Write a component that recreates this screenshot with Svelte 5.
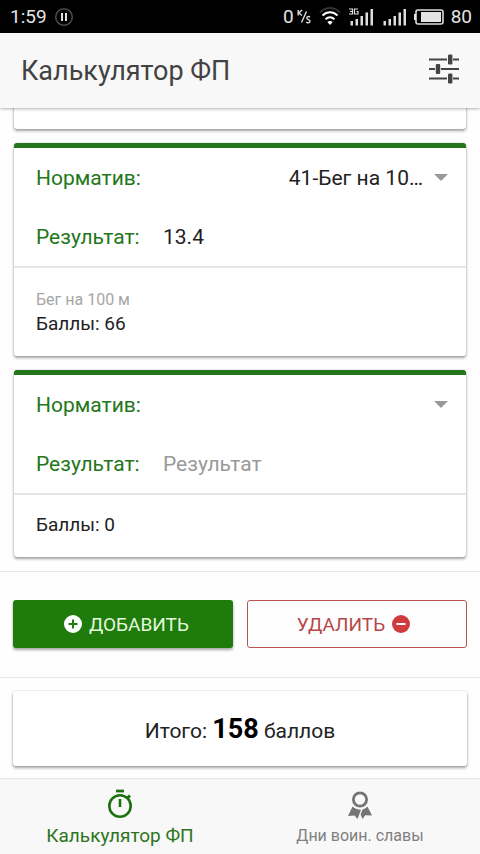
<script>
  let entries = $state([
    { id: 1, standard: '41-Бег на 10…', result: '13.4', name: 'Бег на 100 м', points: 66 },
    { id: 2, standard: '', result: '', name: '', points: 0 },
  ]);

  let total = $state(158);
  let nextId = 3;

  function addEntry() {
    entries.push({ id: nextId++, standard: '', result: '', name: '', points: 0 });
  }

  function removeEntry() {
    entries.pop();
  }
</script>

<div class="app">
  <div class="status">
    <span class="clock">1:59</span>
    <svg class="pause" width="20" height="20" viewBox="0 0 20 20">
      <circle cx="10" cy="10" r="8.3" fill="none" stroke="#4a4a4a" stroke-width="1.6" />
      <path d="M7 6h2v8H7zM11 6h2v8h-2z" fill="#ddd" />
    </svg>
    <span class="rate">0</span>
    <svg class="unit" width="14" height="16" viewBox="0 0 14 16" fill="none" stroke="#ddd" stroke-width="1.4">
      <path d="M1.2 1v5.5M5 1L1.8 4L5 6.5M9.5 2.5L4.5 13.5M13 8.2C11.8 7 9.6 7.6 9.8 9.2C10 10.8 13 10.4 13 12.2C13 14 10.2 14.2 9.2 12.8" />
    </svg>
    <svg class="wifi" width="22" height="20" viewBox="0 0 22 20" fill="none" stroke-width="2">
      <path d="M1 5.5C7-.5 15-.5 21 5.5" stroke="#333" />
      <path d="M3.5 8.5C8 4.3 14 4.3 18.5 8.5M6.5 12.2C9.3 9.7 12.7 9.7 15.5 12.2" stroke="#fff" />
      <path d="M8.3 15Q11 13 13.7 15L11 18z" fill="#fff" />
    </svg>
    <svg class="signal" width="26" height="20" viewBox="0 0 26 20" fill="#ddd">
      <path d="M2.5 14H5v4.5H2.5zM7.5 12H10v6.5H7.5zM12.5 9H15v9.5h-2.5zM17.5 5.5H20v13h-2.5zM22.5 2H25v16.5h-2.5z" />
      <path d="M1 2h3.5v5H1M2 4.5h2.5M10 2H6.5v5H10V4.5H8.5" fill="none" stroke="#ddd" stroke-width="1.2" />
    </svg>
    <svg class="signal" width="26" height="20" viewBox="0 0 26 20" fill="#ddd">
      <path d="M2.5 14H5v4.5H2.5zM7.5 12H10v6.5H7.5zM12.5 9H15v9.5h-2.5zM17.5 5.5H20v13h-2.5zM22.5 2H25v16.5h-2.5z" />
    </svg>
    <svg class="battery" width="30" height="16" viewBox="0 0 30 16">
      <rect x="2" y="1" width="27" height="14" rx="2" fill="none" stroke="#ddd" stroke-width="1.6" />
      <path d="M0 5h2v6H0zM7 3h20v10H7z" fill="#e4e4e4" />
    </svg>
    <span>80</span>
  </div>

  <header>
    <h1>Калькулятор ФП</h1>
    <button class="options" aria-label="Настройки">
      <svg width="30" height="30" viewBox="0 0 30 30" fill="#444">
        <path d="M0 4.5h18v2H0zM24 4.5h6v2h-6zM0 14h6v2H0zM12 14h18v2H12zM0 23.5h18v2H0zM24 23.5h6v2h-6z" />
        <rect x="19" y="0.5" width="4.4" height="10" rx="1.2" />
        <rect x="6.8" y="10" width="4.4" height="10" rx="1.2" />
        <rect x="19" y="19.5" width="4.4" height="10" rx="1.2" />
      </svg>
    </button>
  </header>

  <main>
    <section class="card previous"></section>
    {#each entries as entry (entry.id)}
      <section class="card entry">
        <div class="row">
          <label for="standard-{entry.id}">Норматив:</label>
          <span class="picker">
            <select id="standard-{entry.id}" bind:value={entry.standard}>
              <option value=""></option>
              <option value="41-Бег на 10…">41-Бег на 10…</option>
            </select>
            <svg width="14" height="8" viewBox="0 0 14 8"><path d="M0 0h14L7 7z" fill="#999" /></svg>
          </span>
        </div>
        <div class="row">
          <label for="result-{entry.id}">Результат:</label>
          <input id="result-{entry.id}" type="text" placeholder="Результат" bind:value={entry.result} />
        </div>
        <div class="points">
          {#if entry.name}
            <p class="name">{entry.name}</p>
          {/if}
          <p>Баллы: {entry.points}</p>
        </div>
      </section>
    {/each}
  </main>

  <div class="actions">
    <button class="add" onclick={addEntry}>
      <svg width="18" height="18" viewBox="0 0 18 18">
        <circle cx="9" cy="9" r="9" fill="#fff" />
        <path d="M9 4.5v9M4.5 9h9" stroke="#1e7b0c" stroke-width="2" />
      </svg>
      ДОБАВИТЬ
    </button>
    <button class="remove" onclick={removeEntry}>
      УДАЛИТЬ
      <svg width="18" height="18" viewBox="0 0 18 18">
        <circle cx="9" cy="9" r="9" fill="#d03c3c" />
        <path d="M4.5 9h9" stroke="#fff" stroke-width="2" />
      </svg>
    </button>
  </div>

  <div class="summary">
    <div class="card total">
      <p>Итого: <b>{total}</b> баллов</p>
    </div>
  </div>

  <nav>
    <a class="active" href="#calculator">
      <svg width="26" height="30" viewBox="0 0 26 30" fill="none" stroke="#1c7010">
        <circle cx="13" cy="17" r="10.7" stroke-width="2.6" />
        <path d="M9 2h8" stroke-width="2.8" />
        <path d="M13 10v8" stroke-width="2.6" />
        <path d="M20 9.5L23 6.5" stroke-width="3" />
      </svg>
      Калькулятор ФП
    </a>
    <a href="#days">
      <svg width="24" height="28" viewBox="0 0 24 28" fill="#757575">
        <circle cx="12" cy="8.5" r="6.6" fill="none" stroke="#757575" stroke-width="2.8" />
        <path d="M4.5 15.5C6.5 17.5 9 18.6 13 18.7L9.5 28L6.5 24.5L0 25z" />
        <path d="M19.5 15.5C18 17 16.2 18 14.6 18.5L12.6 23.5L14.5 28L17.3 24.3L24 24.5z" />
      </svg>
      Дни воин. славы
    </a>
  </nav>
</div>

<style>
  :global(body) {
    margin: 0;
  }

  .app {
    display: flex;
    flex-direction: column;
    height: 100vh;
    background: #fefefe;
    color: #222;
    font-family: Roboto, 'Liberation Sans', sans-serif;
  }

  .app * {
    box-sizing: border-box;
  }

  svg {
    flex: none;
  }

  h1,
  p {
    margin: 0;
    font-weight: 400;
  }

  button,
  input,
  select {
    font: inherit;
    color: inherit;
    background: none;
    border: 0;
    padding: 0;
  }

  .status {
    display: flex;
    align-items: center;
    flex: none;
    height: 33px;
    padding: 0 8px 0 10px;
    background: #000;
    color: #e4e4e4;
    font-size: 19px;
  }

  .pause {
    margin-left: 7px;
  }

  .rate {
    margin-left: auto;
  }

  .unit {
    margin-left: 3px;
  }

  .wifi {
    margin: 0 7px 0 8px;
  }

  .signal {
    margin-right: 7px;
  }

  .battery {
    margin-right: 7px;
  }

  header {
    display: flex;
    align-items: center;
    justify-content: space-between;
    flex: none;
    height: 75px;
    padding: 0 21px;
    background: #f8f8f8;
    box-shadow: 0 1px 3px rgba(0, 0, 0, 0.3);
    z-index: 1;
  }

  h1 {
    font-size: 27px;
    color: #424242;
  }

  .options {
    display: flex;
    padding-bottom: 4px;
  }

  main {
    display: flex;
    flex-direction: column;
    justify-content: flex-end;
    flex: 1;
    gap: 14px;
    min-height: 0;
    padding: 0 14px 14px;
    overflow: hidden;
  }

  .card {
    flex: none;
    border-radius: 3px;
    background: #fff;
    box-shadow: 0 2px 3px rgba(0, 0, 0, 0.35), 0 0 2px rgba(0, 0, 0, 0.2);
  }

  .previous {
    height: 32px;
  }

  .entry {
    border-top: 5px solid #23761a;
  }

  .row {
    display: flex;
    align-items: center;
    height: 59px;
    padding: 0 18px 0 22px;
    font-size: 21px;
  }

  .row label {
    flex: none;
    width: 127px;
    color: #23761a;
  }

  .row input {
    flex: 1;
    min-width: 0;
    outline: 0;
  }

  .row input::placeholder {
    color: #999;
    opacity: 1;
  }

  .picker {
    display: flex;
    flex: 1;
    align-items: center;
    justify-content: flex-end;
    gap: 11px;
  }

  .picker select {
    width: 160px;
    appearance: none;
    text-align-last: right;
    outline: 0;
  }

  .points {
    padding: 18px 22px 20px;
    border-top: 2px solid #e6e6e6;
    font-size: 19px;
    line-height: 24px;
  }

  .name {
    padding-top: 2px;
    color: #a6a6a6;
    font-size: 16px;
  }

  .actions {
    display: grid;
    grid-template-columns: 1fr 1fr;
    gap: 14px;
    flex: none;
    padding: 28px 13px 29px;
    border-top: 1px solid #e8e8e8;
    border-bottom: 1px solid #e8e8e8;
  }

  .actions button {
    display: flex;
    align-items: center;
    justify-content: center;
    gap: 7px;
    height: 48px;
    border-radius: 3px;
    font-size: 19px;
  }

  .actions .add {
    padding-left: 7px;
    background: #1e7b0c;
    color: #e4f8dc;
    box-shadow: 0 2px 3px rgba(0, 0, 0, 0.35);
  }

  .actions .remove {
    padding-right: 7px;
    border: 1px solid #b85454;
    color: #b84646;
  }

  .summary {
    flex: none;
    padding: 13px 13px 12px;
  }

  .total {
    display: flex;
    align-items: center;
    justify-content: center;
    height: 75px;
    font-size: 21px;
  }

  .total b {
    color: #000;
    font-size: 27px;
  }

  nav {
    display: flex;
    flex: none;
    height: 76px;
    border-top: 1px solid #e4e4e4;
    background: #f8f8f8;
  }

  nav a {
    display: flex;
    flex: 1;
    flex-direction: column;
    align-items: center;
    justify-content: flex-end;
    gap: 6px;
    padding-bottom: 7px;
    color: #808080;
    font-size: 16px;
    line-height: 22px;
    text-decoration: none;
  }

  nav .active {
    color: #2c7420;
    font-size: 19px;
  }
</style>
